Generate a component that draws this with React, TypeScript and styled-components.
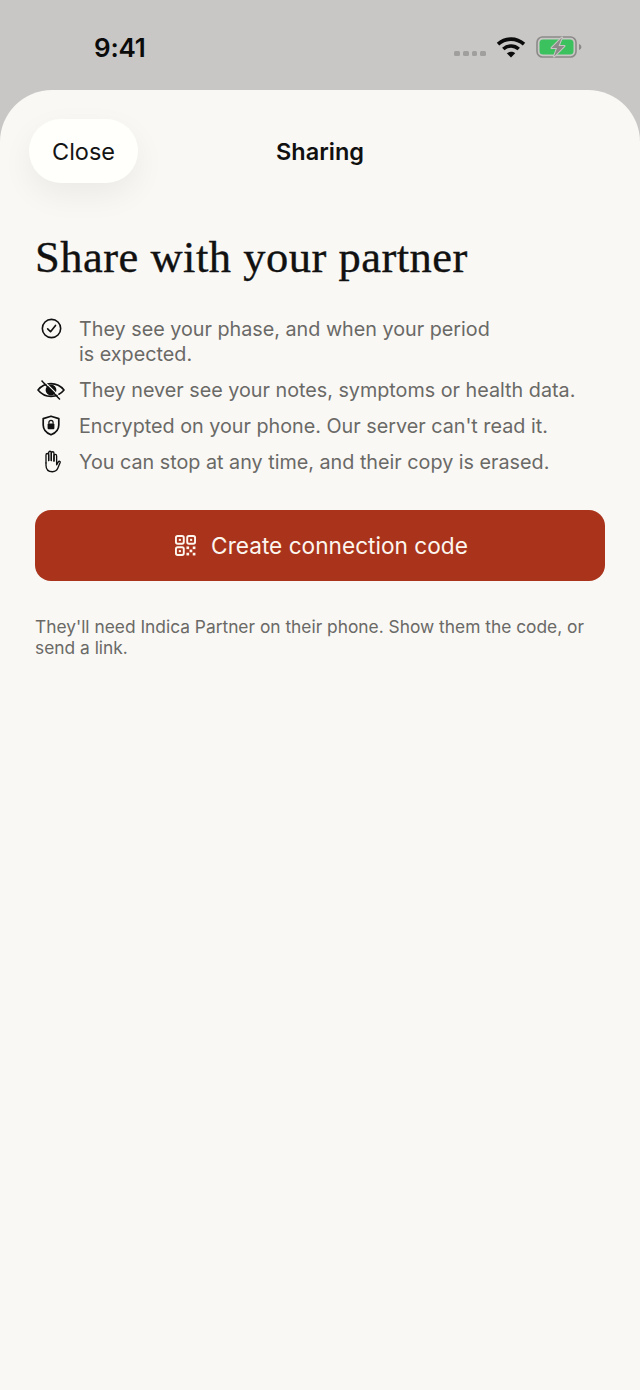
import React from 'react';
import styled, { createGlobalStyle } from 'styled-components';

const GlobalStyle = createGlobalStyle`
  html, body {
    margin: 0;
    padding: 0;
    background: #c8c7c5;
  }
  * {
    box-sizing: border-box;
  }
`;

const Screen = styled.div`
  width: 640px;
  height: 1390px;
  display: flex;
  flex-direction: column;
  overflow: hidden;
  background: #c8c7c5;
  font-family: Inter, "Liberation Sans", sans-serif;
`;

const StatusBar = styled.div`
  height: 90px;
  flex-shrink: 0;
  display: flex;
  justify-content: space-between;
  align-items: flex-start;
  padding: 33px 58px 0 94px;
`;

const Clock = styled.div`
  font-size: 26px;
  line-height: 29px;
  font-weight: 600;
  letter-spacing: -0.2px;
  color: #0b0b0b;
`;

const StatusIcons = styled.div`
  display: flex;
  align-items: center;
  gap: 10px;
  margin-top: 3px;
`;

const SignalDots = styled.div`
  display: flex;
  gap: 3px;
  margin-top: 13px;
`;

const Dot = styled.span`
  width: 5.75px;
  height: 5.5px;
  border-radius: 1.5px;
  background: #a09f9d;
`;

const Sheet = styled.div`
  flex: 1;
  background: #f9f8f5;
  border-radius: 52px 52px 0 0;
  padding: 29px 35px 0;
`;

const Header = styled.div`
  height: 64px;
  display: flex;
  align-items: center;
  justify-content: center;
  position: relative;
`;

const CloseButton = styled.button`
  position: absolute;
  left: -6px;
  top: 0;
  width: 109px;
  height: 64px;
  border: none;
  border-radius: 32px;
  background: #fffffb;
  box-shadow: 0 12px 32px rgba(0, 0, 0, 0.06);
  font-family: inherit;
  font-size: 23.5px;
  color: #141414;
`;

const HeaderTitle = styled.div`
  font-size: 23.5px;
  font-weight: 600;
  color: #101010;
`;

const Title = styled.h1`
  margin: 46px 0 0;
  font-family: "Liberation Serif", serif;
  font-weight: 400;
  font-size: 44.5px;
  line-height: 56px;
  letter-spacing: 0.5px;
  -webkit-text-stroke: 0.35px #111;
  color: #111;
`;

const PointList = styled.ul`
  list-style: none;
  margin: 32px 0 0;
  padding: 0;
  display: flex;
  flex-direction: column;
  gap: 11px;
`;

const Point = styled.li`
  display: flex;
  gap: 12px;
  align-items: flex-start;
`;

const PointIcon = styled.span`
  width: 32px;
  height: 25px;
  margin-top: -1px;
  flex-shrink: 0;
  display: flex;
  align-items: center;
  justify-content: center;
  color: #111;
`;

const PointText = styled.span<{ $maxWidth: number }>`
  font-size: 19.75px;
  line-height: 25px;
  color: #6a6966;
  max-width: ${(props) => props.$maxWidth}px;
`;

const PrimaryButton = styled.button`
  width: 100%;
  height: 71px;
  margin-top: 35px;
  padding: 0 0 0 3px;
  border: none;
  border-radius: 16px;
  background: #a9341b;
  color: #fdf6ef;
  display: flex;
  align-items: center;
  justify-content: center;
  gap: 15px;
  font-family: inherit;
  font-size: 22.65px;
  font-weight: 400;
`;

const Note = styled.p`
  margin: 35px 0 0;
  font-size: 17.35px;
  line-height: 21px;
  color: #6a6966;
`;

const WifiIcon = () => (
  <svg width="30" height="22" viewBox="0 0 30 22" fill="none" stroke="#0b0b0b" strokeWidth="3.6">
    <path d="M2 8.2C9.5 1.4 20.5 1.4 28 8.2" />
    <path d="M7.3 13C11.8 9 18.2 9 22.7 13" />
    <path d="M15 21.5L10.8 17.2C13.2 15.4 16.8 15.4 19.2 17.2Z" fill="#0b0b0b" stroke="none" />
  </svg>
);

const BatteryIcon = () => (
  <svg width="46" height="22" viewBox="0 0 46 22" fill="none">
    <rect x="1" y="1" width="39" height="20" rx="5.5" stroke="#8b8a88" strokeWidth="1.6" />
    <rect x="3.5" y="3.5" width="34" height="15" rx="3.5" fill="#3cc15f" />
    <path d="M43 8v6c1.5-.5 2.4-1.6 2.4-3S44.5 8.5 43 8Z" fill="#8b8a88" />
    <path d="M26 1.5L15.5 12H21L18 20.5L28.5 10H22.5Z" fill="#8b8a88" stroke="#c8c7c5" strokeWidth="2" strokeLinejoin="round" paintOrder="stroke" />
  </svg>
);

const CheckCircleIcon = () => (
  <svg width="21" height="21" viewBox="0 0 22 22" fill="none" stroke="currentColor" strokeWidth="1.7" strokeLinecap="round" strokeLinejoin="round">
    <circle cx="11" cy="11" r="9.6" />
    <path d="M7 11.4L10 14.4L15.2 7.8" />
  </svg>
);

const EyeSlashIcon = () => (
  <svg width="28" height="20" viewBox="0 0 28 20" fill="none" stroke="currentColor" strokeWidth="1.6" strokeLinecap="round" strokeLinejoin="round">
    <path d="M1 10C4.5 5.6 9 3.6 14 3.6S23.5 5.6 27 10C23.5 14.4 19 16.4 14 16.4S4.5 14.4 1 10Z" />
    <circle cx="14" cy="10" r="4.6" fill="currentColor" />
    <path d="M5 1L22.5 19" />
    <path d="M6.8 .8L24.2 18.2" stroke="#f9f8f5" strokeWidth="1.2" />
  </svg>
);

const ShieldLockIcon = () => (
  <svg width="18" height="21" viewBox="0 0 18 21" fill="none">
    <path d="M9 1.2L16.8 3.6V10C16.8 14.8 13.6 18 9 19.8C4.4 18 1.2 14.8 1.2 10V3.6Z" stroke="currentColor" strokeWidth="1.7" strokeLinejoin="round" />
    <rect x="5.6" y="8.6" width="6.8" height="5.6" rx="1" fill="currentColor" />
    <path d="M6.9 8.8V7.4C6.9 6.2 7.8 5.3 9 5.3S11.1 6.2 11.1 7.4V8.8" stroke="currentColor" strokeWidth="1.2" />
  </svg>
);

const HandIcon = () => (
  <svg width="19" height="23" viewBox="0 0 20 24" fill="none" stroke="currentColor" strokeWidth="1.4" strokeLinecap="round" strokeLinejoin="round">
    <path d="M4.2 13.5V5.2C4.2 3 7 3 7 5.2V11" />
    <path d="M7 11V2.9C7 .7 9.8 .7 9.8 2.9V11" />
    <path d="M9.8 11V3.4C9.8 1.2 12.6 1.2 12.6 3.4V11.5" />
    <path d="M12.6 11.5V6.2C12.6 4 15.4 4 15.4 6.2V15.5L17 12.6C18 11 19.6 11.8 19 13.4L16.6 19.2C15.6 21.6 13.6 22.8 11 22.8C6.6 22.8 4.2 20.4 4.2 16V13.5" />
  </svg>
);

const QrIcon = () => (
  <svg width="21" height="21" viewBox="0 0 22 22" fill="none" stroke="currentColor" strokeWidth="2">
    <rect x="1" y="1" width="8.2" height="8.2" rx="1.8" />
    <rect x="12.8" y="1" width="8.2" height="8.2" rx="1.8" />
    <rect x="1" y="12.8" width="8.2" height="8.2" rx="1.8" />
    <g fill="currentColor" stroke="none">
      <rect x="4" y="4" width="2.2" height="2.2" />
      <rect x="15.8" y="4" width="2.2" height="2.2" />
      <rect x="4" y="15.8" width="2.2" height="2.2" />
      <rect x="12" y="12" width="2.8" height="2.8" />
      <rect x="18.6" y="12" width="2.8" height="2.8" />
      <rect x="15.3" y="15.3" width="2.8" height="2.8" />
      <rect x="12" y="18.6" width="2.8" height="2.8" />
      <rect x="18.6" y="18.6" width="2.8" height="2.8" />
    </g>
  </svg>
);

const points = [
  { icon: <CheckCircleIcon />, text: 'They see your phase, and when your period is expected.', maxWidth: 420 },
  { icon: <EyeSlashIcon />, text: 'They never see your notes, symptoms or health data.', maxWidth: 520 },
  { icon: <ShieldLockIcon />, text: "Encrypted on your phone. Our server can't read it.", maxWidth: 520 },
  { icon: <HandIcon />, text: 'You can stop at any time, and their copy is erased.', maxWidth: 520 },
];

const App: React.FC = () => {
  return (
    <Screen>
      <GlobalStyle />
      <StatusBar>
        <Clock>9:41</Clock>
        <StatusIcons>
          <SignalDots>
            <Dot />
            <Dot />
            <Dot />
            <Dot />
          </SignalDots>
          <WifiIcon />
          <BatteryIcon />
        </StatusIcons>
      </StatusBar>
      <Sheet>
        <Header>
          <CloseButton>Close</CloseButton>
          <HeaderTitle>Sharing</HeaderTitle>
        </Header>
        <Title>Share with your partner</Title>
        <PointList>
          {points.map((point) => (
            <Point key={point.text}>
              <PointIcon>{point.icon}</PointIcon>
              <PointText $maxWidth={point.maxWidth}>{point.text}</PointText>
            </Point>
          ))}
        </PointList>
        <PrimaryButton>
          <QrIcon />
          Create connection code
        </PrimaryButton>
        <Note>They'll need Indica Partner on their phone. Show them the code, or send a link.</Note>
      </Sheet>
    </Screen>
  );
};

export default App;
